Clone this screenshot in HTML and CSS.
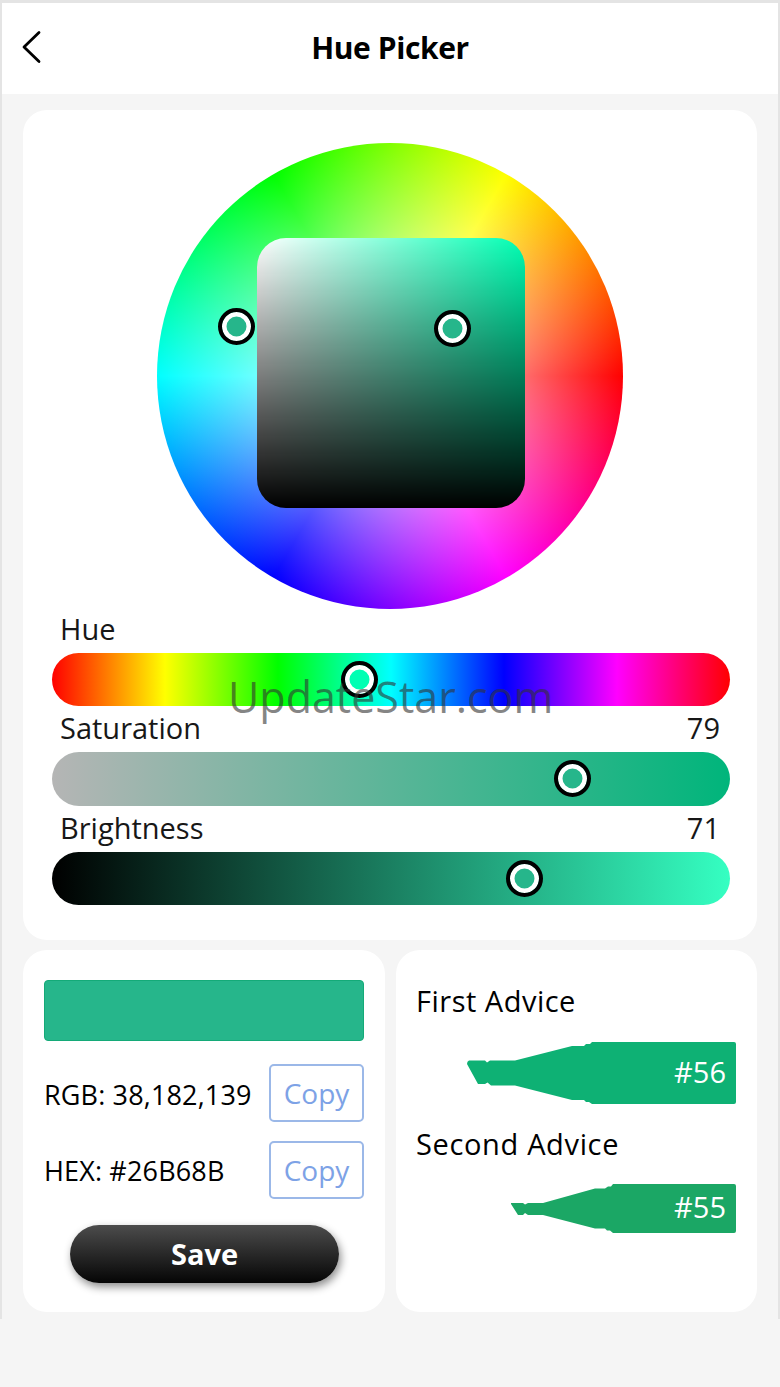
FILE: index.html
```
<!DOCTYPE html>
<html lang="en">
<head>
    <meta charset="UTF-8">
    <meta name="viewport" content="width=device-width, initial-scale=1.0">
    <title>Hue Picker</title>
    <link rel="stylesheet" href="styles.css">
</head>
<body>
    <div class="screen">
        <header class="header">
            <svg class="back" width="20" height="34" viewBox="0 0 20 34"><path d="M18 2.5 L3 17 L18 31.5"/></svg>
            <h1 class="title">Hue Picker</h1>
        </header>
        <main class="content">
            <section class="card picker">
                <div class="wheel">
                    <div class="shade"></div>
                    <span class="knob knob-wheel"></span>
                    <span class="knob knob-shade"></span>
                </div>
                <div class="label"><span>Hue</span></div>
                <div class="slider hue">
                    <span class="knob"></span>
                    <span class="watermark">UpdateStar.com</span>
                </div>
                <div class="label"><span>Saturation</span><span>79</span></div>
                <div class="slider saturation"><span class="knob"></span></div>
                <div class="label"><span>Brightness</span><span>71</span></div>
                <div class="slider brightness"><span class="knob"></span></div>
            </section>
            <div class="columns">
                <section class="card result">
                    <div class="swatch"></div>
                    <div class="row"><span class="rgb">RGB: 38,182,139</span><button class="copy">Copy</button></div>
                    <div class="row"><span class="hex">HEX: #26B68B</span><button class="copy">Copy</button></div>
                    <button class="save">Save</button>
                </section>
                <section class="card advice">
                    <h2 class="first-title">First Advice</h2>
                    <div class="pen pen-first">
                        <svg width="269" height="62" viewBox="0 0 269 62"><path d="M2 18.5H18L20 20.5L23 18.5H48L105 4H117L119 2H123L125 0H267Q269 0 269 2V60Q269 62 267 62H125L122 60H119L117 58H105L48 43.5H24L20.5 40.5L18 42H11L0 22Q0 19 2 18.5Z"/></svg>
                        <span>#56</span>
                    </div>
                    <h2 class="second-title">Second Advice</h2>
                    <div class="pen pen-second">
                        <svg width="225" height="49" viewBox="0 0 225 49"><path d="M0 19H12L14 20.5L17 19H32L84 4.5H94L97 2.500H100L102 0H223Q225 0 225 2V47Q225 49 223 49H102L99 46.500H96L94 44.500H84L32 31H17L14 29L12 31H7L0 20Z"/></svg>
                        <span>#55</span>
                    </div>
                </section>
            </div>
        </main>
    </div>
</body>
</html>
```
FILE: styles.css
```
* {
    box-sizing: border-box;
}
body {
    margin: 0;
    min-height: 100vh;
    background: #f5f5f5;
    font-family: "Open Sans", "Noto Sans", sans-serif;
    font-size: 29px;
    color: #000;
}
.screen {
    height: 1319px;
    border: 2px solid #e4e4e4;
    border-top-width: 3px;
    border-bottom: 0;
}
.header {
    height: 91px;
    display: grid;
    grid-template-columns: 20px 1fr 20px;
    align-items: center;
    padding: 0 19px 3px;
    background: #fff;
}
.back {
    fill: none;
    stroke: #000;
    stroke-width: 2.8;
    stroke-linecap: round;
    stroke-linejoin: round;
}
.title {
    margin: 0;
    font-size: 30px;
    font-weight: 700;
    letter-spacing: -0.4px;
    text-align: center;
}
.content {
    padding: 16px 21px 0;
}
.card {
    background: #fff;
    border-radius: 24px;
}
.picker {
    height: 830px;
    padding: 33px 27px 0 29px;
}
.wheel {
    position: relative;
    width: 466px;
    height: 466px;
    margin-left: 105px;
    padding: 95px 0 0 99.5px;
    border-radius: 50%;
    background:
        radial-gradient(closest-side, #fff, rgba(255, 255, 255, 0)),
        conic-gradient(from 90deg, #f00, #f0f, #00f, #0ff, #0f0, #ff0, #f00);
}
.shade {
    width: 268.5px;
    height: 270px;
    border-radius: 29px;
    background:
        linear-gradient(to top, #000, rgba(0, 0, 0, 0)),
        linear-gradient(to right, #fff, #00ffb3);
}
.knob {
    position: absolute;
    width: 37px;
    height: 37px;
    border: 4px solid #000;
    border-radius: 50%;
    background: #26b68b;
    box-shadow: inset 0 0 0 4.5px #fff;
}
.knob-wheel {
    left: 61px;
    top: 165px;
}
.knob-shade {
    left: 277px;
    top: 167px;
}
.label {
    height: 46px;
    display: flex;
    justify-content: space-between;
    padding: 0 10px 0 8px;
    line-height: 43px;
    color: #171717;
}
.wheel + .label {
    height: 44px;
    line-height: 39px;
}
.slider {
    position: relative;
    height: 53.3px;
    border-radius: 27px;
}
.slider .knob {
    top: 8px;
}
.hue {
    background: linear-gradient(to right, #f00, #ff0, #0f0, #0ff, #00f, #f0f, #f00);
}
.hue .knob {
    left: 289px;
    background: #00ffb3;
}
.saturation {
    background: linear-gradient(to right, #b5b5b5, #00b57b);
}
.saturation .knob {
    left: 502px;
}
.brightness {
    background: linear-gradient(to right, #000, #35ffc2);
}
.brightness .knob {
    left: 454px;
}
.watermark {
    position: absolute;
    left: 176px;
    top: 14px;
    font-size: 43px;
    line-height: 60px;
    color: rgba(50, 50, 50, 0.6);
}
.columns {
    display: grid;
    grid-template-columns: 362px 361px;
    gap: 11px;
    margin-top: 10px;
}
.result {
    height: 362px;
    padding: 30px 21px 0;
}
.swatch {
    height: 61px;
    margin-bottom: 23px;
    border: 1px solid #14aa78;
    border-radius: 4px;
    background: #26b68b;
}
.row {
    height: 58px;
    display: flex;
    justify-content: space-between;
    align-items: center;
    margin-bottom: 19px;
    font-size: 27px;
    letter-spacing: 0.15px;
}
.rgb {
    padding-top: 2px;
}
.copy {
    width: 95px;
    height: 58px;
    padding: 0;
    border: 2px solid #9bb8e8;
    border-radius: 5px;
    background: #fff;
    font-family: inherit;
    font-size: 28px;
    color: #7da2e6;
}
.save {
    display: block;
    width: 269px;
    height: 58px;
    margin: 26px 0 0 26px;
    padding: 0 0 2px;
    border: 0;
    border-radius: 29px;
    background: linear-gradient(#4c4c4c, #050505);
    box-shadow: 2px 4px 8px rgba(0, 0, 0, 0.45);
    font-family: inherit;
    font-size: 29px;
    font-weight: 700;
    color: #fff;
}
.advice {
    height: 362px;
    padding: 30px 21px 0 20px;
}
.advice h2 {
    margin: 0;
    font-size: 29px;
    font-weight: 400;
    line-height: 42px;
    letter-spacing: 0.5px;
}
.advice .second-title {
    line-height: 40px;
    padding-bottom: 2px;
    letter-spacing: 0.65px;
}
.pen {
    display: grid;
    justify-items: end;
    align-items: center;
    color: #fff;
    font-size: 29px;
    font-weight: 500;
}
.pen svg,
.pen span {
    grid-area: 1 / 1;
}
.pen span {
    padding: 0 10px 3px 0;
    line-height: 40px;
}
.pen-first {
    height: 62px;
    margin: 20px 0 20px;
    fill: #0eb174;
}
.pen-second {
    height: 49px;
    margin-top: 18px;
    fill: #1ba765;
}
```
